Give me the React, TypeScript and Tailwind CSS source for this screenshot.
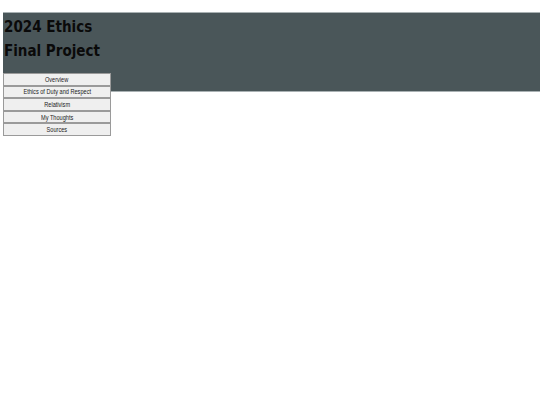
import React from 'react'

const links = ['Overview', 'Ethics of Duty and Respect', 'Relativism', 'My Thoughts', 'Sources']

export default function App() {
  return (
    <div className="min-h-[405px] bg-white pt-[12px] pl-[3px]">
      <header className="h-[80px] border-y border-[#a9b1b3] bg-[#4a5659]">
        <h1
          className="pt-[2px] pl-[1px] text-[15px] font-bold leading-[24px] text-[#0a0a0a]"
          style={{ fontFamily: '"DejaVu Sans Condensed", "DejaVu Sans", sans-serif' }}
        >
          2024 Ethics
          <br />
          Final Project
        </h1>
        <nav className="mt-[10px] flex w-[108px] flex-col">
          {links.map((l) => (
            <button
              key={l}
              className="flex h-[12.6px] items-center justify-center border border-[#9a9a9a] bg-[#efefef] text-[7px] leading-none text-[#222]"
              style={{ fontFamily: '"Liberation Sans", Arial, sans-serif' }}
            >
              <span className="inline-block scale-x-[0.8] whitespace-nowrap">{l}</span>
            </button>
          ))}
        </nav>
      </header>
    </div>
  )
}
